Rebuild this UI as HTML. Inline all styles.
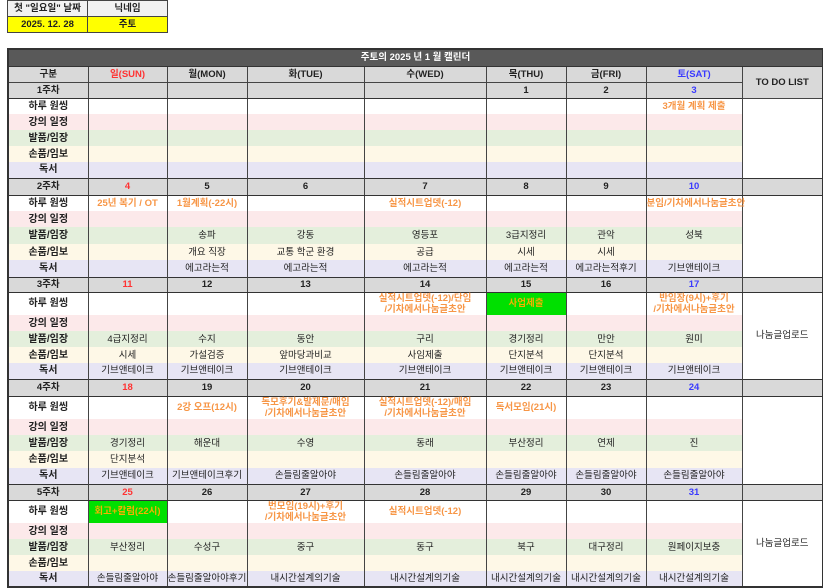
<!DOCTYPE html>
<html><head><meta charset="utf-8">
<style>
*{margin:0;padding:0;box-sizing:border-box}
body{width:823px;height:587px;background:#fff;position:relative;overflow:hidden;font-family:"Liberation Sans","Noto Sans CJK KR","NanumGothic",sans-serif;color:#222}
table{border-collapse:collapse;table-layout:fixed;position:absolute}
td{text-align:center;font-size:9.5px;white-space:nowrap;overflow:visible;padding:0;line-height:11px}
#top{left:7px;top:0;width:160px}
#top td{border:1px solid #444;height:16px;font-weight:bold;font-size:9.5px}
#top tr.y td{background:#ffff00;height:16px}
#top tr.g td{background:#f2f2f2}
#cal{left:7px;top:48px;width:815px;border:2px solid #333}
#cal td{border-left:1px solid #444;border-right:1px solid #444}
tr.t td{background:#595959;color:#fff;font-weight:bold;height:17px;text-align:center;border-bottom:1px solid #333}
tr.hd td{background:#d9d9d9;font-weight:bold;height:16px;border-bottom:1px solid #444}
tr.h td{background:#d9d9d9;font-weight:bold;border-top:1px solid #333;border-bottom:1px solid #333}
td.l{font-weight:bold;font-size:10px}
tr.o td{background:#fff}
tr.k td{background:#fce9ea}
tr.b td{background:#e4efdc}
tr.s td{background:#fef8e7}
tr.d td{background:#e7e5f4}
td.todo{background:#fff!important;vertical-align:middle}
.r{color:#ff3333}.bl{color:#3a3aff}
.or{color:#f79646;font-weight:bold}
td.gr{background:#00e000!important;color:#f5b000;font-weight:bold}
</style></head><body>
<table id="top"><colgroup><col style="width:80px"><col style="width:80px"></colgroup>
<tr class="g"><td>첫 "일요일" 날짜</td><td>닉네임</td></tr>
<tr class="y"><td>2025. 12. 28</td><td>주토</td></tr>
</table>
<table id="cal">
<colgroup><col style="width:80px"><col style="width:79px"><col style="width:80px"><col style="width:117px"><col style="width:122px"><col style="width:80px"><col style="width:80px"><col style="width:96px"><col style="width:81px"></colgroup>
<tr class="t"><td colspan="9">주토의 2025 년 1 월 캘린더</td></tr>
<tr class="hd"><td>구분</td><td class="r">일(SUN)</td><td>월(MON)</td><td>화(TUE)</td><td>수(WED)</td><td>목(THU)</td><td>금(FRI)</td><td class="bl">토(SAT)</td><td rowspan="2">TO DO LIST</td></tr>
<tr class="h" style="height:16px"><td>1주차</td><td></td><td></td><td></td><td></td><td>1</td><td>2</td><td class="bl">3</td></tr>
<tr class="o" style="height:16px"><td class="l">하루 원씽</td><td></td><td></td><td></td><td></td><td></td><td></td><td class="or">3개월 계획 제출</td><td class="todo" rowspan="5"></td></tr>
<tr class="k" style="height:16px"><td class="l">강의 일정</td><td></td><td></td><td></td><td></td><td></td><td></td><td></td></tr>
<tr class="b" style="height:16px"><td class="l">발품/임장</td><td></td><td></td><td></td><td></td><td></td><td></td><td></td></tr>
<tr class="s" style="height:16px"><td class="l">손품/임보</td><td></td><td></td><td></td><td></td><td></td><td></td><td></td></tr>
<tr class="d" style="height:16px"><td class="l">독서</td><td></td><td></td><td></td><td></td><td></td><td></td><td></td></tr>

<tr class="h" style="height:17px"><td>2주차</td><td class="r">4</td><td>5</td><td>6</td><td>7</td><td>8</td><td>9</td><td class="bl">10</td><td></td></tr>
<tr class="o" style="height:16px"><td class="l">하루 원씽</td><td class="or">25년 복기 / OT</td><td class="or">1월계획(-22시)</td><td></td><td class="or">실적시트업뎃(-12)</td><td></td><td></td><td class="or">분임/기차에서나눔글초안</td><td class="todo" rowspan="5"></td></tr>
<tr class="k" style="height:16px"><td class="l">강의 일정</td><td></td><td></td><td></td><td></td><td></td><td></td><td></td></tr>
<tr class="b" style="height:17px"><td class="l">발품/임장</td><td></td><td>송파</td><td>강동</td><td>영등포</td><td>3급지정리</td><td>관악</td><td>성북</td></tr>
<tr class="s" style="height:16px"><td class="l">손품/임보</td><td></td><td>개요 직장</td><td>교통 학군 환경</td><td>공급</td><td>시세</td><td>시세</td><td></td></tr>
<tr class="d" style="height:17px"><td class="l">독서</td><td></td><td>에고라는적</td><td>에고라는적</td><td>에고라는적</td><td>에고라는적</td><td>에고라는적후기</td><td>기브앤테이크</td></tr>

<tr class="h" style="height:15px"><td>3주차</td><td class="r">11</td><td>12</td><td>13</td><td>14</td><td>15</td><td>16</td><td class="bl">17</td><td></td></tr>
<tr class="o" style="height:23px"><td class="l">하루 원씽</td><td></td><td></td><td></td><td class="or">실적시트업뎃(-12)/단임<br>/기차에서나눔글초안</td><td class="gr">사업제출</td><td></td><td class="or">반임장(9시)+후기<br>/기차에서나눔글초안</td><td class="todo" rowspan="5">나눔글업로드</td></tr>
<tr class="k" style="height:16px"><td class="l">강의 일정</td><td></td><td></td><td></td><td></td><td></td><td></td><td></td></tr>
<tr class="b" style="height:16px"><td class="l">발품/임장</td><td>4급지정리</td><td>수지</td><td>동안</td><td>구리</td><td>경기정리</td><td>만안</td><td>원미</td></tr>
<tr class="s" style="height:16px"><td class="l">손품/임보</td><td>시세</td><td>가설검증</td><td>앞마당과비교</td><td>사임제출</td><td>단지분석</td><td>단지분석</td><td></td></tr>
<tr class="d" style="height:16px"><td class="l">독서</td><td>기브앤테이크</td><td>기브앤테이크</td><td>기브앤테이크</td><td>기브앤테이크</td><td>기브앤테이크</td><td>기브앤테이크</td><td>기브앤테이크</td></tr>

<tr class="h" style="height:17px"><td>4주차</td><td class="r">18</td><td>19</td><td>20</td><td>21</td><td>22</td><td>23</td><td class="bl">24</td><td></td></tr>
<tr class="o" style="height:23px"><td class="l">하루 원씽</td><td></td><td class="or">2강 오프(12시)</td><td class="or">독모후기&amp;발제문/매임<br>/기차에서나눔글초안</td><td class="or">실적시트업뎃(-12)/매임<br>/기차에서나눔글초안</td><td class="or">독서모임(21시)</td><td></td><td></td><td class="todo" rowspan="5"></td></tr>
<tr class="k" style="height:16px"><td class="l">강의 일정</td><td></td><td></td><td></td><td></td><td></td><td></td><td></td></tr>
<tr class="b" style="height:16px"><td class="l">발품/임장</td><td>경기정리</td><td>해운대</td><td>수영</td><td>동래</td><td>부산정리</td><td>연제</td><td>진</td></tr>
<tr class="s" style="height:17px"><td class="l">손품/임보</td><td>단지분석</td><td></td><td></td><td></td><td></td><td></td><td></td></tr>
<tr class="d" style="height:16px"><td class="l">독서</td><td>기브앤테이크</td><td>기브앤테이크후기</td><td>손들림줄알아야</td><td>손들림줄알아야</td><td>손들림줄알아야</td><td>손들림줄알아야</td><td>손들림줄알아야</td></tr>

<tr class="h" style="height:16px"><td>5주차</td><td class="r">25</td><td>26</td><td>27</td><td>28</td><td>29</td><td>30</td><td class="bl">31</td><td></td></tr>
<tr class="o" style="height:23px"><td class="l">하루 원씽</td><td class="gr">회고+칼럼(22시)</td><td></td><td class="or">번모임(19시)+후기<br>/기차에서나눔글초안</td><td class="or">실적시트업뎃(-12)</td><td></td><td></td><td></td><td class="todo" rowspan="5">나눔글업로드</td></tr>
<tr class="k" style="height:16px"><td class="l">강의 일정</td><td></td><td></td><td></td><td></td><td></td><td></td><td></td></tr>
<tr class="b" style="height:16px"><td class="l">발품/임장</td><td>부산정리</td><td>수성구</td><td>중구</td><td>동구</td><td>북구</td><td>대구정리</td><td>원페이지보충</td></tr>
<tr class="s" style="height:16px"><td class="l">손품/임보</td><td></td><td></td><td></td><td></td><td></td><td></td><td></td></tr>
<tr class="d" style="height:16px"><td class="l">독서</td><td>손들림줄알아야</td><td>손들림줄알아야후기</td><td>내시간설계의기술</td><td>내시간설계의기술</td><td>내시간설계의기술</td><td>내시간설계의기술</td><td>내시간설계의기술</td></tr>
</table>
</body></html>
